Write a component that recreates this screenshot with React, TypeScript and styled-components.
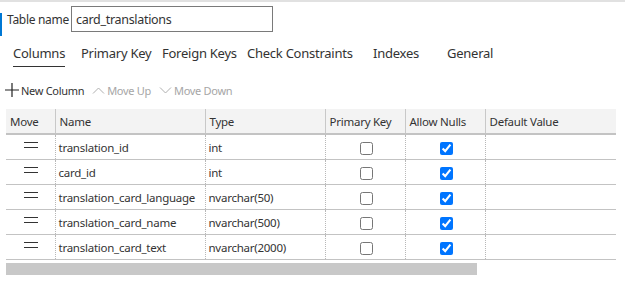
import React from 'react';
import styled, { createGlobalStyle } from 'styled-components';

const GlobalStyle = createGlobalStyle`
    body {
        margin: 0;
        background: #fff;
        font-family: "Noto Sans", "Open Sans", sans-serif;
        color: #333;
    }
`

const Page = styled.div`
    width: 625px;
    height: 282px;
    border-top: 2px solid #e1e1e1;
    box-sizing: border-box;
    overflow: hidden;
`

const NameRow = styled.div`
    position: relative;
    display: flex;
    align-items: center;
    height: 26px;
    margin-top: 4px;
    padding-left: 7px;
    &::before {
        content: '';
        position: absolute;
        left: 0;
        top: 7px;
        width: 2px;
        height: 23px;
        background: #0078d4;
    }
`

const Label = styled.label`
    font-size: 12px;
    letter-spacing: -0.3px;
    width: 64px;
    white-space: nowrap;
    color: #333;
`

const NameInput = styled.input`
    box-sizing: border-box;
    width: 202px;
    height: 26px;
    border: 1px solid #7a7a7a;
    border-radius: 0;
    padding: 0 0 0 4px;
    font-family: inherit;
    font-size: 12.5px;
    letter-spacing: -0.3px;
    color: #333;
    outline: none;
`

const Tabs = styled.div`
    display: flex;
    padding-left: 13px;
    margin-top: 11px;
    height: 24px;
`

const Tab = styled.div<{ $w: number; $active?: boolean }>`
    width: ${p => p.$w}px;
    flex: none;
    font-size: 13px;
    letter-spacing: -0.25px;
    color: #333;
    & > span {
        display: inline-block;
        line-height: 20px;
        padding-bottom: 3px;
        border-bottom: ${p => (p.$active ? '1.5px solid #333' : '1.5px solid transparent')};
    }
`

const Toolbar = styled.div`
    display: flex;
    align-items: center;
    gap: 8px;
    padding-left: 5px;
    margin-top: 12px;
    height: 22px;
`

const ToolBtn = styled.div<{ $disabled?: boolean }>`
    display: flex;
    align-items: center;
    gap: 2px;
    font-size: 11px;
    letter-spacing: -0.3px;
    color: ${p => (p.$disabled ? '#a6a6a6' : '#333')};
    svg {
        display: block;
    }
`

const TableWrap = styled.div`
    margin: 8px 0 0 6px;
    width: 610px;
`

const Grid = styled.table`
    width: 610px;
    border-collapse: collapse;
    table-layout: fixed;
    font-size: 11.5px;
    letter-spacing: -0.25px;
`

const Th = styled.th<{ $w: number }>`
    width: ${p => p.$w}px;
    height: 25px;
    padding: 0 0 0 4px;
    background: #f3f3f3;
    text-align: left;
    font-weight: normal;
    color: #333;
    border-left: 1px solid #c8c8c8;
    border-bottom: 2px solid #c3c3c3;
    box-sizing: border-box;
    &:first-child {
        border-left: none;
    }
`

const Td = styled.td<{ $center?: boolean }>`
    height: 24px;
    padding: 0 0 0 3px;
    text-align: ${p => (p.$center ? 'center' : 'left')};
    border-left: 1px dotted #b8b8b8;
    border-bottom: 1px solid #c3c3c3;
    white-space: nowrap;
    overflow: hidden;
    &:first-child {
        border-left: none;
    }
    input {
        margin: 0;
        vertical-align: middle;
        width: 13px;
        height: 13px;
    }
`

const Grip = styled.div`
    width: 14px;
    height: 4px;
    margin: 0 auto;
    border-top: 1px solid #333;
    border-bottom: 1px solid #333;
    transform: translate(-1px, -2px);
`

const Scrollbar = styled.div`
    margin-top: 3px;
    width: 471px;
    height: 12px;
    background: #c8c8c8;
`

const columns = [
    { name: 'translation_id', type: 'int' },
    { name: 'card_id', type: 'int' },
    { name: 'translation_card_language', type: 'nvarchar(50)' },
    { name: 'translation_card_name', type: 'nvarchar(500)' },
    { name: 'translation_card_text', type: 'nvarchar(2000)' },
]

const tabs = [
    { label: 'Columns', w: 68 },
    { label: 'Primary Key', w: 81 },
    { label: 'Foreign Keys', w: 85 },
    { label: 'Check Constraints', w: 126 },
    { label: 'Indexes', w: 74 },
    { label: 'General', w: 60 },
]

const App = () => {
    return (
        <Page>
            <GlobalStyle />
            <NameRow>
                <Label>Table name</Label>
                <NameInput defaultValue="card_translations" />
            </NameRow>
            <Tabs>
                {tabs.map((t, i) => (
                    <Tab key={t.label} $w={t.w} $active={i === 0}>
                        <span>{t.label}</span>
                    </Tab>
                ))}
            </Tabs>
            <Toolbar>
                <ToolBtn>
                    <svg width="14" height="14" viewBox="0 0 14 14">
                        <path d="M7 0v14M0 7h14" stroke="#222" strokeWidth="1.2" fill="none" />
                    </svg>
                    New Column
                </ToolBtn>
                <ToolBtn $disabled>
                    <svg width="13" height="13" viewBox="0 0 13 13">
                        <path d="M1 9.5L6.5 4L12 9.5" stroke="#b0b0b0" strokeWidth="1" fill="none" />
                    </svg>
                    Move Up
                </ToolBtn>
                <ToolBtn $disabled>
                    <svg width="13" height="13" viewBox="0 0 13 13">
                        <path d="M1 3.5L6.5 9L12 3.5" stroke="#b0b0b0" strokeWidth="1" fill="none" />
                    </svg>
                    Move Down
                </ToolBtn>
            </Toolbar>
            <TableWrap>
                <Grid>
                    <thead>
                        <tr>
                            <Th $w={49}>Move</Th>
                            <Th $w={150}>Name</Th>
                            <Th $w={120}>Type</Th>
                            <Th $w={80}>Primary Key</Th>
                            <Th $w={80}>Allow Nulls</Th>
                            <Th $w={131}>Default Value</Th>
                        </tr>
                    </thead>
                    <tbody>
                        {columns.map(c => (
                            <tr key={c.name}>
                                <Td $center><Grip /></Td>
                                <Td>{c.name}</Td>
                                <Td>{c.type}</Td>
                                <Td $center><input type="checkbox" readOnly /></Td>
                                <Td $center><input type="checkbox" checked readOnly /></Td>
                                <Td />
                            </tr>
                        ))}
                    </tbody>
                </Grid>
                <Scrollbar />
            </TableWrap>
        </Page>
    );
};

export default App;
